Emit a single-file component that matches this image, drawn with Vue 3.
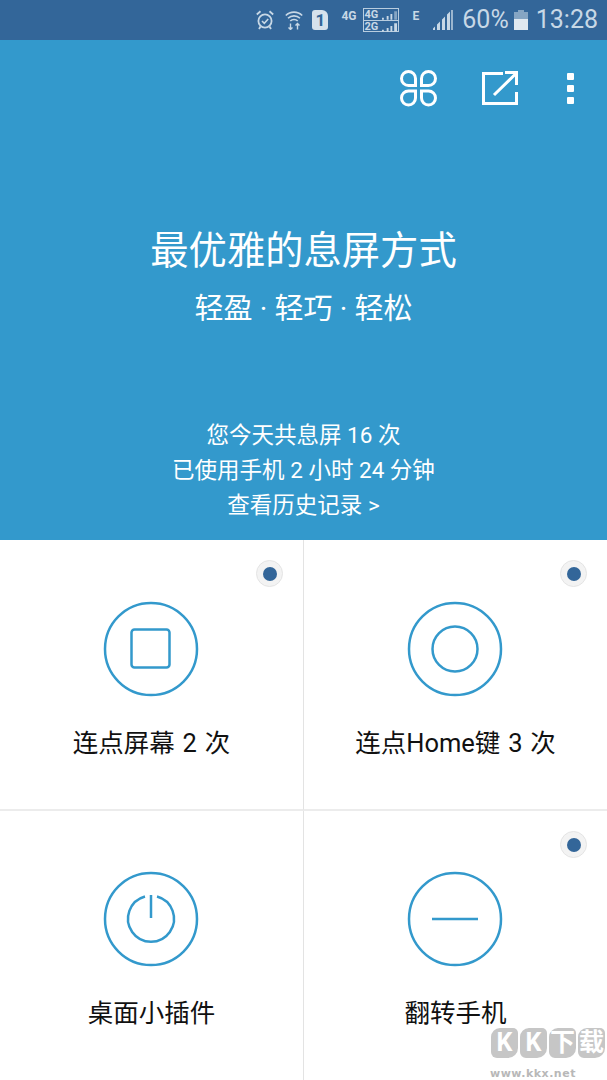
<script setup>
const options = [
  { label: '连点屏幕 2 次', icon: 'square', picked: true },
  { label: '连点Home键 3 次', icon: 'circle', picked: true },
  { label: '桌面小插件', icon: 'power', picked: false },
  { label: '翻转手机', icon: 'line', picked: true },
]
const logo = ['K', 'K', '下', '载']
</script>

<template>
  <div class="page">
    <div class="statusBar">
      <svg class="alarm" width="18" height="20" viewBox="0 0 18 20" fill="none" stroke="currentColor">
        <circle cx="9" cy="11" r="6.600" stroke-width="1.800" />
        <path d="M6 11l2.300 2.300 3.900-4.300" stroke-width="1.600" />
        <path d="M.8 4.500l3.700-3.200M17.200 4.500l-3.700-3.200M4.500 16.500L3 19M13.500 16.500L15 19" stroke-width="1.800" />
      </svg>
      <svg class="wifi" width="18" height="20" viewBox="0 0 18 20" fill="none" stroke="currentColor">
        <path d="M.8 5.500c4.500-4.500 11.900-4.500 16.400 0M3 8.300c3.300-3.300 8.700-3.300 12 0M5.300 11c2-2 5.400-2 7.400 0" stroke-width="1.600" />
        <path d="M5.500 13.500V19.500M3.500 17.500l2 2 2-2M12.500 19.500V13.500M10.500 15.500l2-2 2 2" stroke-width="1.400" />
      </svg>
      <div class="sim">1</div>
      <span class="tiny fourG">4G</span>
      <div class="dual">
        <div class="dualRow"><span>4G</span><svg width="16" height="9" viewBox="0 0 16 9"><path d="M0 7h2v2H0zM5 5h2v4H5zM9 3h2v6H9z" fill="currentColor" /><path d="M13 0h3v9h-3z" fill="currentColor" opacity=".55" /></svg></div>
        <div class="dualRow"><span>2G</span><svg width="16" height="9" viewBox="0 0 16 9"><path d="M0 7h2v2H0zM5 5h2v4H5zM9 3h2v6H9zM13 0h3v9h-3z" fill="currentColor" /></svg></div>
      </div>
      <span class="tiny edge">E</span>
      <svg class="signal" width="20" height="20" viewBox="0 0 20 20" fill="currentColor">
        <path d="M0 18.500l2-2V20H0zM4 14.500l3-3V20H4zM9 9.500l3-3V20H9zM14 4.500l3-3V20h-3z" />
        <path d="M18 0h2v20h-2z" opacity=".7" />
      </svg>
      <span class="bigText percent">60%</span>
      <svg class="battery" width="14" height="20" viewBox="0 0 14 20">
        <path d="M4 0h6v2h4v7H0V2h4z" fill="currentColor" opacity=".55" />
        <path d="M0 9h14v11H0z" fill="#dfe8f0" />
      </svg>
      <span class="bigText clock">13:28</span>
    </div>

    <div class="hero">
      <div class="toolbar">
        <svg width="37" height="37" viewBox="0 0 37 37" fill="none" stroke="#fff" stroke-width="3">
          <path d="M15.500 15.500H8.500A7 7 0 1 1 15.500 8.500Z" />
          <path d="M21.500 15.500H28.500A7 7 0 1 0 21.500 8.500Z" />
          <path d="M15.500 21H8.500A7 7 0 1 0 15.500 28Z" />
          <path d="M21.500 21H28.500A7 7 0 1 1 21.500 28Z" />
        </svg>
        <svg class="share" width="36" height="34" viewBox="0 0 36 34" fill="none" stroke="#fff" stroke-width="3">
          <path d="M21 2.500H1.500V32.500H34.500V21" />
          <path d="M12 24L33.500 3M23 1.500H34.500V14" />
        </svg>
        <div class="dots"><i></i><i></i><i></i></div>
      </div>
      <div class="heroText">
        <h1>最优雅的息屏方式</h1>
        <p class="slogan">轻盈 · 轻巧 · 轻松</p>
      </div>
      <div class="stats">
        <p>您今天共息屏 16 次</p>
        <p>已使用手机 2 小时 24 分钟</p>
        <p>查看历史记录 &gt;</p>
      </div>
    </div>

    <div class="grid">
      <div v-for="o in options" :key="o.label" class="cell">
        <span v-if="o.picked" class="radio"><i></i></span>
        <svg class="icon" width="96" height="96" viewBox="0 0 96 96" fill="none" stroke="#3399cc" stroke-width="2.500">
          <circle cx="48" cy="48" r="46" />
          <rect v-if="o.icon === 'square'" x="28.500" y="28.500" width="38" height="38" rx="3" />
          <circle v-if="o.icon === 'circle'" cx="48" cy="48" r="22.500" />
          <g v-if="o.icon === 'power'">
            <path d="M42 25.500a23 23 0 1 0 12 0" />
            <path d="M48 24v23" />
          </g>
          <path v-if="o.icon === 'line'" d="M25 48h46" />
        </svg>
        <div class="label">{{ o.label }}</div>
      </div>
    </div>

    <div class="watermark">
      <div class="wmLogo">
        <span v-for="(c, i) in logo" :key="i">{{ c }}</span>
      </div>
      <div class="wmUrl">www.kkx.net</div>
    </div>
  </div>
</template>

<style>
html,
body {
  margin: 0;
  padding: 0;
}
</style>

<style scoped>
.page {
  width: 607px;
  height: 1080px;
  position: relative;
  overflow: hidden;
  background: #fff;
  font-family: Roboto, "Noto Sans CJK SC", sans-serif;
}
.statusBar {
  height: 40px;
  background: #336699;
  color: #c8d8e6;
  display: flex;
  align-items: center;
  justify-content: flex-end;
  padding-right: 9px;
  box-sizing: border-box;
}
.alarm {
  margin-right: 11px;
}
.wifi {
  margin-right: 9px;
}
.sim {
  width: 16px;
  height: 20px;
  border-radius: 3px 6px 3px 3px;
  background: #d5e1ec;
  color: #336699;
  font-size: 17px;
  font-weight: 700;
  line-height: 20px;
  text-align: center;
  margin-right: 13px;
}
.tiny {
  font-size: 12px;
  font-weight: 700;
  align-self: flex-start;
  margin-top: 9px;
}
.fourG {
  margin-right: 6px;
}
.dual {
  width: 36px;
  height: 24px;
  border: 1px solid #b9cddf;
  box-sizing: border-box;
  font-size: 11px;
  line-height: 11px;
  font-weight: 700;
  margin-right: 14px;
}
.dualRow {
  height: 11px;
  display: flex;
  justify-content: space-between;
  align-items: flex-end;
  padding: 0 1px;
  overflow: hidden;
}
.dualRow:first-child {
  border-bottom: 1px solid #b9cddf;
}
.dualRow svg {
  width: 15px;
  flex: none;
}
.edge {
  margin-right: 14px;
}
.signal {
  margin-right: 9px;
}
.bigText {
  font-size: 25px;
  line-height: 40px;
}
.battery {
  margin: 0 8px 0 5px;
}
.hero {
  height: 500px;
  background: #3399cc;
  color: #fff;
  display: flex;
  flex-direction: column;
  align-items: center;
}
.toolbar {
  align-self: stretch;
  height: 36px;
  margin-top: 30px;
  display: flex;
  align-items: center;
  justify-content: flex-end;
  padding-right: 33px;
}
.share {
  margin-left: 45px;
}
.dots {
  margin-left: 49px;
  display: flex;
  flex-direction: column;
  gap: 5px;
}
.dots i {
  display: block;
  width: 7px;
  height: 7px;
  background: #fff;
  border-radius: 1px;
}
.heroText {
  margin-top: 117px;
  text-align: center;
}
h1 {
  margin: 0;
  font-size: 38.300px;
  line-height: 56px;
  font-weight: 400;
}
.slogan {
  margin: 10px 0 0;
  font-size: 29px;
  line-height: 40px;
}
.stats {
  margin-top: auto;
  margin-bottom: 17px;
  text-align: center;
  font-size: 22.500px;
  line-height: 35px;
}
.stats p {
  margin: 0;
}
.grid {
  display: grid;
  grid-template-columns: 304px 303px;
  grid-template-rows: 271px 269px;
}
.cell {
  position: relative;
  display: flex;
  flex-direction: column;
  align-items: center;
  box-sizing: border-box;
  padding-top: 60px;
}
.cell:nth-child(odd) {
  border-right: 1px solid #e3e3e3;
}
.cell:nth-child(-n + 2) {
  border-bottom: 2px solid #ececec;
  padding-top: 61px;
}
.icon {
  display: block;
  margin-left: -2px;
}
.label {
  margin-top: 26px;
  font-size: 25.500px;
  word-spacing: 1.500px;
  line-height: 40px;
  color: #111;
}
.radio {
  position: absolute;
  top: 20px;
  right: 20px;
  width: 27px;
  height: 27px;
  box-sizing: border-box;
  border-radius: 50%;
  background: #f3f3f3;
  border: 1px solid #e4e4e4;
  display: flex;
  align-items: center;
  justify-content: center;
}
.radio i {
  display: block;
  width: 14px;
  height: 14px;
  border-radius: 50%;
  background: #336699;
}
.watermark {
  position: absolute;
  right: 2px;
  top: 1028px;
  width: 114px;
  color: #b8b8b8;
}
.wmLogo {
  display: flex;
  justify-content: space-between;
}
.wmLogo span {
  width: 27px;
  height: 30px;
  background: #c6c6c6;
  border-radius: 9px 5px 10px 6px;
  color: #fff;
  font-size: 25px;
  line-height: 30px;
  font-weight: 700;
  text-align: center;
}
.wmUrl {
  margin-top: 10px;
  margin-left: -1px;
  font-family: "DejaVu Sans", sans-serif;
  font-size: 11px;
  line-height: 11px;
  font-weight: 700;
  letter-spacing: 0.500px;
  white-space: nowrap;
}
</style>
